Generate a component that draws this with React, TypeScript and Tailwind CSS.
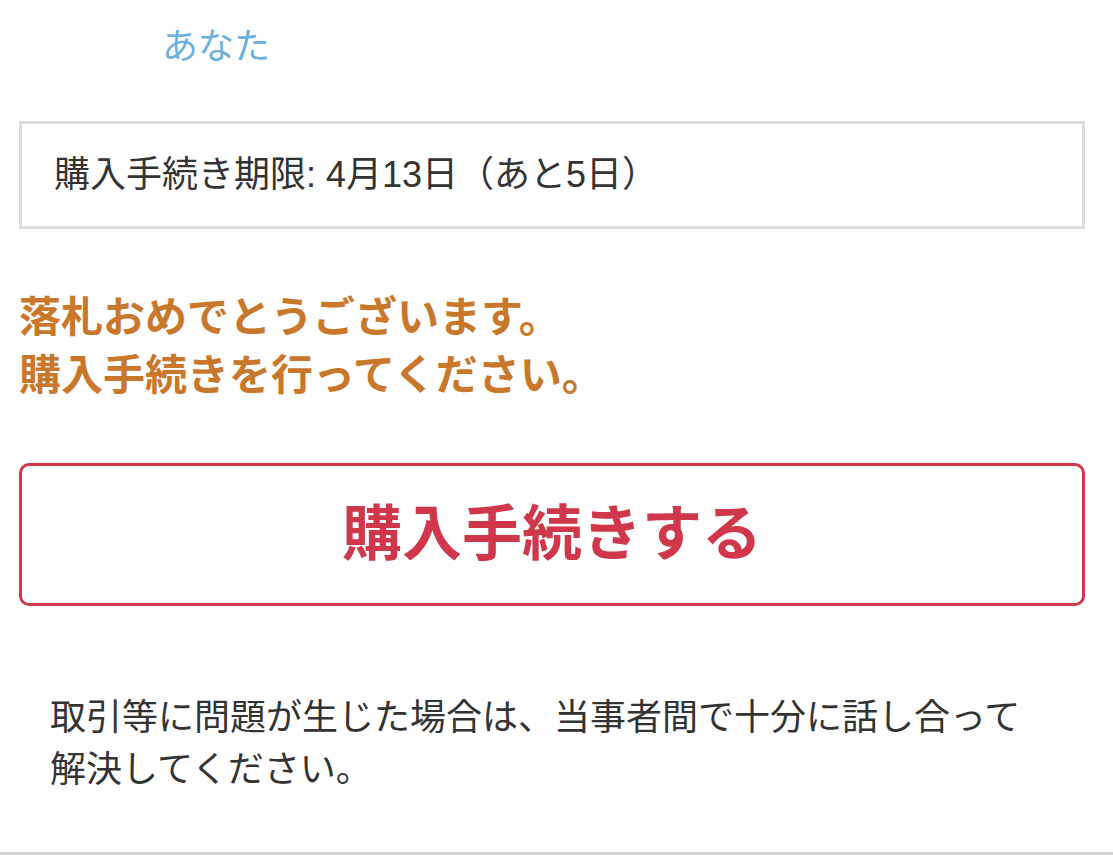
import React from "react";

export default function App() {
  return (
    <div
      className="w-[1113px] h-[855px] bg-white overflow-hidden flex flex-col"
      style={{ fontFamily: '"Liberation Sans", "Noto Sans CJK JP", sans-serif' }}
    >
      <div className="pt-[20px] pl-[162px] text-[36px] leading-[54px] text-[#6bb1dc]">
        あなた
      </div>
      <div className="pl-[19px] pr-[28px] flex flex-col">
        <div className="mt-[47px] h-[108px] border-[3px] border-[#dcdcdc] flex items-center pl-[32px] text-[36px] text-[#333333]">
          購入手続き期限: 4月13日（あと5日）
        </div>
        <div className="mt-[60px] text-[42px] leading-[58px] font-bold text-[#c9782b]">
          <div>落札おめでとうございます。</div>
          <div>購入手続きを行ってください。</div>
        </div>
        <button className="mt-[58px] h-[143px] w-full border-[3px] border-[#d0374b] rounded-[10px] bg-white flex items-center justify-center text-[60px] font-bold text-[#d0374b]">
          購入手続きする
        </button>
        <div className="mt-[86px] pl-[31px] text-[36px] leading-[52px] text-[#333333]">
          <div>取引等に問題が生じた場合は、当事者間で十分に話し合って</div>
          <div>解決してください。</div>
        </div>
      </div>
      <div className="mt-auto h-[3px] w-full bg-[#d0d0d0]" />
    </div>
  );
}
